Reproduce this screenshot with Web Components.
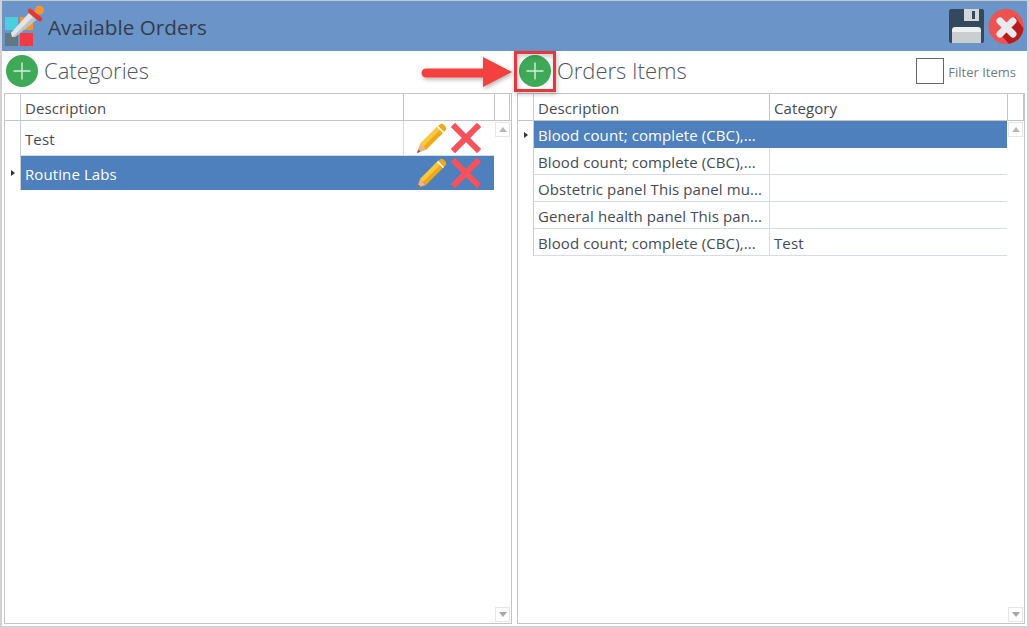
<!DOCTYPE html>
<html>
<head>
<meta charset="utf-8">
<title>Available Orders</title>
<style>
  html, body { margin: 0; background: #fff; }
  body { font-family: "Open Sans", "Noto Sans", sans-serif; overflow: hidden; }
</style>
</head>
<body>

<order-window>
  <title-bar slot="title" heading="Available Orders"></title-bar>

  <grid-panel slot="left" heading="Categories" cols="16px 383px 91px 15px">
    <grid-row head><grid-cell>Description</grid-cell><grid-cell></grid-cell><grid-cell></grid-cell></grid-row>
    <grid-row height="35">
      <grid-cell>Test</grid-cell>
      <grid-cell plain><row-actions></row-actions></grid-cell>
    </grid-row>
    <grid-row height="34" selected current>
      <grid-cell>Routine Labs</grid-cell>
      <grid-cell plain><row-actions></row-actions></grid-cell>
    </grid-row>
  </grid-panel>

  <grid-panel slot="right" heading="Orders Items" cols="16px 236px 238px 16px" filter>
    <grid-row head><grid-cell>Description</grid-cell><grid-cell>Category</grid-cell><grid-cell></grid-cell></grid-row>
    <grid-row selected current><grid-cell>Blood count; complete (CBC),...</grid-cell><grid-cell></grid-cell></grid-row>
    <grid-row><grid-cell>Blood count; complete (CBC),...</grid-cell><grid-cell></grid-cell></grid-row>
    <grid-row><grid-cell>Obstetric panel This panel mu...</grid-cell><grid-cell></grid-cell></grid-row>
    <grid-row><grid-cell>General health panel This pan...</grid-cell><grid-cell></grid-cell></grid-row>
    <grid-row><grid-cell>Blood count; complete (CBC),...</grid-cell><grid-cell>Test</grid-cell></grid-row>
  </grid-panel>

  <callout-arrow slot="overlay"></callout-arrow>
</order-window>

<script>
const orderWindowTemplate = document.createElement('template');
orderWindowTemplate.innerHTML = `
  <style>
  :host {
    display: flex;
    flex-direction: column;
    box-sizing: border-box;
    position: relative;
    width: 1029px;
    height: 628px;
    background: #fff;
    border-top: 1px solid #c9c9c9;
    border-left: 2px solid #d2d2d2;
    border-right: 2px solid #d2d2d2;
    border-bottom: 2px solid #d2d2d2;
  }
  .panels {
    flex: 1;
    display: grid;
    grid-template-columns: 508px 508px;
    column-gap: 5px;
    padding: 0 2px 2px 2px;
    min-height: 0;
  }
  </style>
  <slot name="title"></slot>
  <div class="panels">
    <slot name="left"></slot>
    <slot name="right"></slot>
  </div>
  <slot name="overlay"></slot>
`;

class OrderWindow extends HTMLElement {
  constructor() {
    super();
    this.attachShadow({ mode: 'open' }).appendChild(orderWindowTemplate.content.cloneNode(true));
  }
}

const titleBarTemplate = document.createElement('template');
titleBarTemplate.innerHTML = `
  <style>
  :host {
    display: flex;
    align-items: center;
    height: 50px;
    background: #6b94c8;
    padding: 0 3px 0 3px;
    flex: none;
  }
  .logo { width: 40px; height: 44px; }
  h1 {
    margin: 2px 0 0 3px;
    font-size: 20.7px;
    font-weight: 400;
    color: #333c4b;
    flex: 1;
  }
  .save { width: 36px; height: 36px; margin-right: 3px; }
  .close { width: 36px; height: 37px; }
  </style>
  <svg class="logo" viewBox="0 0 40 44">
    <rect x="0" y="13" width="13" height="13" fill="#4ccfdc"/>
    <rect x="15" y="13" width="13" height="13" fill="#f7942e"/>
    <rect x="0" y="29" width="13" height="13" fill="#63777f"/>
    <rect x="15" y="29" width="13" height="13" fill="#f23a43"/>
    <path d="M6 29 L24 9 L31 16 L10 33 L7 33 Z" fill="#e2e5e7"/>
    <path d="M9 31.5 L28 13 L31 16 L10 33 L7 33 Z" fill="#bcc4c8"/>
    <path d="M30 10 L34 6" stroke="#f59a3c" stroke-width="5"/>
    <circle cx="34.5" cy="6" r="4.5" fill="#f7942e"/>
    <path d="M25 7 L35 15" stroke="#e8352f" stroke-width="4.5" stroke-linecap="round"/>
  </svg>
  <h1></h1>
  <svg class="save" viewBox="0 0 36 36">
    <rect x="0" y="1" width="35" height="34" rx="2" fill="#34495e"/>
    <rect x="15" y="1" width="15" height="12" fill="#d2d7d9"/>
    <rect x="23" y="3" width="3" height="8" fill="#34495e"/>
    <path d="M3 35 V22 Q3 19 6 19 H29 Q32 19 32 22 V35 Z" fill="#ecf0f1"/>
    <rect x="3" y="24" width="29" height="11" fill="#c9cfd1"/>
  </svg>
  <svg class="close" viewBox="0 0 36 37">
    <circle cx="18" cy="18.5" r="17.5" fill="#ef5350"/>
    <path d="M27 8.5 L11 24.5 L21 36 A17.5 17.5 0 0 0 35.5 20.5 Z" fill="#b71c1c"/>
    <path d="M12 13 L25 26 M25 13 L12 26" stroke="#e8eaed" stroke-width="7" stroke-linecap="round"/>
  </svg>
`;

class TitleBar extends HTMLElement {
  constructor() {
    super();
    this.attachShadow({ mode: 'open' }).appendChild(titleBarTemplate.content.cloneNode(true));
    this.shadowRoot.querySelector('h1').textContent = this.getAttribute('heading');
  }
}

const addButtonTemplate = document.createElement('template');
addButtonTemplate.innerHTML = `
  <style>
  :host { display: block; width: 32px; height: 32px; flex: none; }
  svg { display: block; }
  </style>
  <svg width="32" height="32" viewBox="0 0 32 32">
    <circle cx="16" cy="16" r="16" fill="#3ea956"/>
    <path d="M16 7.5 V24.5 M7.5 16 H24.5" stroke="#d6f0dc" stroke-width="1.4"/>
  </svg>
`;

class AddButton extends HTMLElement {
  constructor() {
    super();
    this.attachShadow({ mode: 'open' }).appendChild(addButtonTemplate.content.cloneNode(true));
  }
}

const gridPanelTemplate = document.createElement('template');
gridPanelTemplate.innerHTML = `
  <style>
  :host {
    display: flex;
    flex-direction: column;
    min-height: 0;
  }
  .head {
    display: flex;
    align-items: center;
    height: 42px;
    flex: none;
    padding: 0 9px 2px 2px;
    box-sizing: border-box;
  }
  h2 {
    margin: -2px 0 0 6px;
    font-size: 22px;
    font-weight: 300;
    color: #4d5662;
    flex: 1;
  }
  .filter { display: none; align-items: center; gap: 4px; font-size: 13px; color: #6f7a88; }
  .filter span { margin-top: 1px; }
  :host([filter]) .filter { display: flex; }
  .box { width: 26px; height: 24px; border: 1px solid #666; background: #fff; }
  .grid {
    position: relative;
    flex: 1;
    border: 1px solid #c4c4c4;
    min-height: 0;
  }
  .scroll {
    position: absolute;
    top: 28px;
    right: 1px;
    bottom: 1px;
    width: 15px;
    display: flex;
    flex-direction: column;
    justify-content: space-between;
  }
  .scroll span {
    box-sizing: border-box;
    display: flex;
    align-items: center;
    justify-content: center;
    width: 15px;
    height: 15px;
    border: 1px solid #e6e6e6;
  }
  .scroll i { width: 0; height: 0; border: 4px solid transparent; }
  .up i { border-top-width: 0; border-bottom: 5px solid #b9b9b9; }
  .down i { border-bottom-width: 0; border-top: 5px solid #a8a8a8; }
  </style>
  <div class="head">
    <add-button></add-button>
    <h2></h2>
    <div class="filter"><div class="box"></div><span>Filter Items</span></div>
  </div>
  <div class="grid">
    <slot></slot>
    <div class="scroll">
      <span class="up"><i></i></span>
      <span class="down"><i></i></span>
    </div>
  </div>
`;

class GridPanel extends HTMLElement {
  constructor() {
    super();
    this.attachShadow({ mode: 'open' }).appendChild(gridPanelTemplate.content.cloneNode(true));
    this.shadowRoot.querySelector('h2').textContent = this.getAttribute('heading');
    this.style.setProperty('--cols', this.getAttribute('cols'));
  }
}

const gridRowTemplate = document.createElement('template');
gridRowTemplate.innerHTML = `
  <style>
  :host {
    display: grid;
    grid-template-columns: var(--cols);
    height: var(--row-height, 27px);
    box-sizing: border-box;
    color: #444b55;
    --line: #d5dce6;
  }
  :host([head]) {
    height: 27px;
    --line: #c4c4c4;
    border-bottom: 1px solid #c4c4c4;
  }
  .marker {
    border-right: 1px solid #c8ced6;
    display: flex;
    align-items: center;
    justify-content: center;
  }
  .marker i { display: none; width: 0; height: 0; border: 3.5px solid transparent; border-left: 4px solid #333; border-right-width: 0; }
  :host([current]) .marker i { display: block; }
  :host([selected]) { color: #fff; --line: transparent; }
  :host([selected]) ::slotted(grid-cell) { background: #4d80bc; }
  :host([selected]:not([height])) ::slotted(grid-cell) { border-bottom: 1px solid transparent; }
  :host(:not([head]):not([selected])) ::slotted(grid-cell) { border-bottom: 1px solid var(--line); }
  :host(:not([head])) ::slotted(grid-cell:last-child) { border-right: none; margin-right: 1px; }
  </style>
  <div class="marker"><i></i></div>
  <slot></slot>
`;

class GridRow extends HTMLElement {
  constructor() {
    super();
    this.attachShadow({ mode: 'open' }).appendChild(gridRowTemplate.content.cloneNode(true));
    if (this.hasAttribute('height')) {
      this.style.setProperty('--row-height', this.getAttribute('height') + 'px');
    }
  }
}

const gridCellTemplate = document.createElement('template');
gridCellTemplate.innerHTML = `
  <style>
  :host {
    display: flex;
    align-items: center;
    box-sizing: border-box;
    padding: 2px 4px 0;
    font-size: 15px;
    letter-spacing: .1px;
    white-space: nowrap;
    overflow: hidden;
    border-right: 1px solid var(--line);
    min-width: 0;
  }
  :host([plain]) { padding: 0; }
  </style>
  <slot></slot>
`;

class GridCell extends HTMLElement {
  constructor() {
    super();
    this.attachShadow({ mode: 'open' }).appendChild(gridCellTemplate.content.cloneNode(true));
  }
}

const rowActionsTemplate = document.createElement('template');
rowActionsTemplate.innerHTML = `
  <style>
  :host { display: flex; align-items: center; gap: 4px; padding-left: 12px; }
  svg { display: block; }
  </style>
  <svg width="31" height="31" viewBox="0 0 31 31">
    <path d="M1 30 L4 21 L10 27 Z" fill="#e8b48c"/>
    <path d="M1 30 L2.2 26.5 L4.5 28.8 Z" fill="#8a5a3a"/>
    <path d="M4 21 L22 3 L28 9 L10 27 Z" fill="#f0a818"/>
    <path d="M4 21 L22 3 L25 6 L7 24 Z" fill="#f8c840"/>
    <path d="M22 3 L24.5 1 Q26 0.5 27.5 1.5 L29.5 3.5 Q30.5 5 30 6.5 L28 9 Z" fill="#f0a818"/>
    <path d="M21.5 3.5 L27.5 9.5" stroke="#fff" stroke-width="1.6"/>
  </svg>
  <svg width="30" height="30" viewBox="0 0 30 30">
    <path d="M4 4 L26 26 M26 4 L4 26" stroke="#f7525c" stroke-width="6" stroke-linecap="square"/>
  </svg>
`;

class RowActions extends HTMLElement {
  constructor() {
    super();
    this.attachShadow({ mode: 'open' }).appendChild(rowActionsTemplate.content.cloneNode(true));
  }
}

const calloutArrowTemplate = document.createElement('template');
calloutArrowTemplate.innerHTML = `
  <style>
  :host {
    position: absolute;
    left: 417px;
    top: 50px;
    width: 142px;
    height: 44px;
    display: block;
    pointer-events: none;
  }
  svg { display: block; overflow: visible; }
  </style>
  <svg width="142" height="44" viewBox="0 0 142 44">
    <defs>
      <filter id="s" x="-20%" y="-30%" width="140%" height="170%">
        <feDropShadow dx="1" dy="2" stdDeviation="2" flood-color="#000" flood-opacity=".3"/>
      </filter>
    </defs>
    <g filter="url(#s)">
      <path d="M7 17.5 H64 V6 L93 21 L64 36 V26.5 H7 A4.5 4.5 0 0 1 7 17.5 Z" fill="#f5403f"/>
      <rect x="96.5" y="1.5" width="39" height="38" fill="none" stroke="#e5373c" stroke-width="3"/>
    </g>
  </svg>
`;

class CalloutArrow extends HTMLElement {
  constructor() {
    super();
    this.attachShadow({ mode: 'open' }).appendChild(calloutArrowTemplate.content.cloneNode(true));
  }
}

customElements.define('order-window', OrderWindow);
customElements.define('title-bar', TitleBar);
customElements.define('add-button', AddButton);
customElements.define('grid-panel', GridPanel);
customElements.define('grid-row', GridRow);
customElements.define('grid-cell', GridCell);
customElements.define('row-actions', RowActions);
customElements.define('callout-arrow', CalloutArrow);
</script>
</body>
</html>
